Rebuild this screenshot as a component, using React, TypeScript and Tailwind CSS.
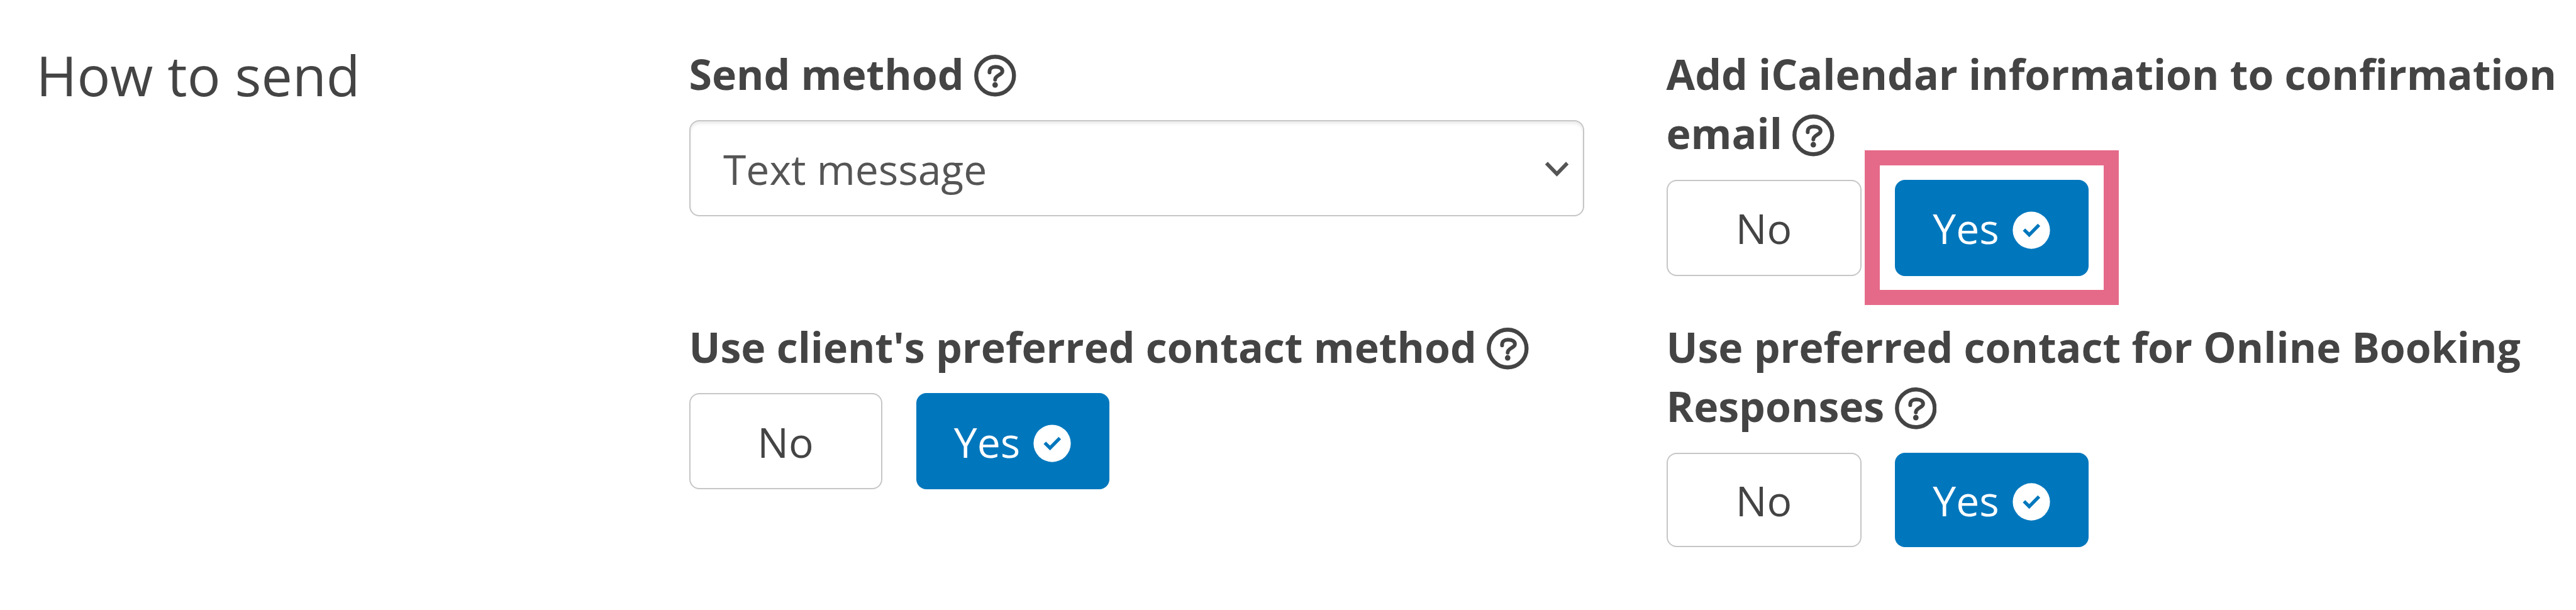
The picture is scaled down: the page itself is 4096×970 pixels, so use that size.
import { useState } from "react";

function HelpIcon() {
  return (
    <svg
      viewBox="0 0 71 71"
      fill="none"
      className="ml-[16.5px] inline-block size-[66.6px] align-[-11.5px]"
    >
      <circle
        cx="35.5"
        cy="35.5"
        r="32"
        stroke="currentColor"
        strokeWidth="6.8"
      />
      <path
        d="M26 30V28.5C26 23.5 30 20.6 36 20.6C43 20.6 47.8 23.4 47.8 28C47.8 34.5 35.5 34.5 35.5 42.5"
        stroke="currentColor"
        strokeWidth="6.4"
        strokeLinecap="round"
      />
      <circle
        cx="35.5"
        cy="51.2"
        r="4.7"
        fill="currentColor"
      />
    </svg>
  );
}

function CheckIcon() {
  return (
    <svg
      viewBox="0 0 64 64"
      fill="none"
      className="mt-[7px] size-[60px]"
    >
      <circle
        cx="32"
        cy="32"
        r="31.6"
        fill="#fff"
      />
      <path
        d="M19.5 31L28.4 39.8L45 23"
        stroke="#0077bd"
        strokeWidth="5.8"
      />
    </svg>
  );
}

type YesNoProps = {
  className: string;
  highlighted?: boolean;
};

function YesNo({
  className,
  highlighted,
}: YesNoProps) {
  const [
    value,
    setValue,
  ] = useState(true);

  const base =
    "relative flex items-center justify-center rounded-[16px] text-[66px] leading-[90px]";

  const off =
    "border-2 border-[#c6c6c6] bg-white text-[#444]";

  const on =
    "bg-[#0077bd] text-white";

  return (
    <div className={`grid ${className}`}>

      <button
        type="button"
        className={`${base} ${value ? off : on}`}
        onClick={() => setValue(false)}
      >
        <span>No</span>
      </button>

      <button
        type="button"
        className={`${base} gap-[21px] ${value ? on : off}`}
        onClick={() => setValue(true)}
      >
        <span>Yes</span>

        {value && <CheckIcon />}

        {highlighted && (
          <span className="pointer-events-none absolute -top-[47px] -right-[48px] -bottom-[46px] -left-[48px] border-[24.4px] border-[#e56a8a]" />
        )}
      </button>

    </div>
  );
}

type FieldProps = {
  label: string;
  children: React.ReactNode;
};

function Field({
  label,
  children,
}: FieldProps) {
  return (
    <div>

      <div className="mb-[27px] text-[66.15px] leading-[94.5px] font-bold">
        {label}
        <HelpIcon />
      </div>

      {children}

    </div>
  );
}

export default function App() {
  return (
    <main className="flex h-[970px] w-[4096px] overflow-hidden bg-white pt-[69.5px] pl-[57.5px] font-['Open_Sans',sans-serif] text-[#444]">

      <h2 className="w-[1038px] shrink-0 text-[88px] leading-[98px]">
        How to send
      </h2>

      <div className="grid grid-cols-[1423px_1446px] grid-rows-[434px_auto] gap-x-[131px]">

        <Field label="Send method">
          <div className="flex h-[153px] items-center justify-between rounded-[16px] border-2 border-[#c6c6c6] pr-[22.5px] pl-[52.5px] text-[66px] leading-[90px] text-[#555] shadow-[inset_0_4px_4px_rgba(0,0,0,0.075)]">
            <span>Text message</span>

            <svg
              viewBox="0 0 39 26"
              fill="none"
              className="mt-[3px] w-[37px]"
            >
              <path
                d="M2 2.5L19.5 20.5L37 2.5"
                stroke="#555"
                strokeWidth="6.2"
              />
            </svg>
          </div>
        </Field>

        <Field label="Add iCalendar information to confirmation email">
          <YesNo
            className="h-[153px] grid-cols-[310px_308px] gap-x-[53px]"
            highlighted
          />
        </Field>

        <Field label="Use client's preferred contact method">
          <YesNo className="h-[153px] grid-cols-[307px_307px] gap-x-[54px]" />
        </Field>

        <Field label="Use preferred contact for Online Booking Responses">
          <YesNo className="h-[150px] grid-cols-[310px_308px] gap-x-[53px]" />
        </Field>

      </div>

    </main>
  );
}
